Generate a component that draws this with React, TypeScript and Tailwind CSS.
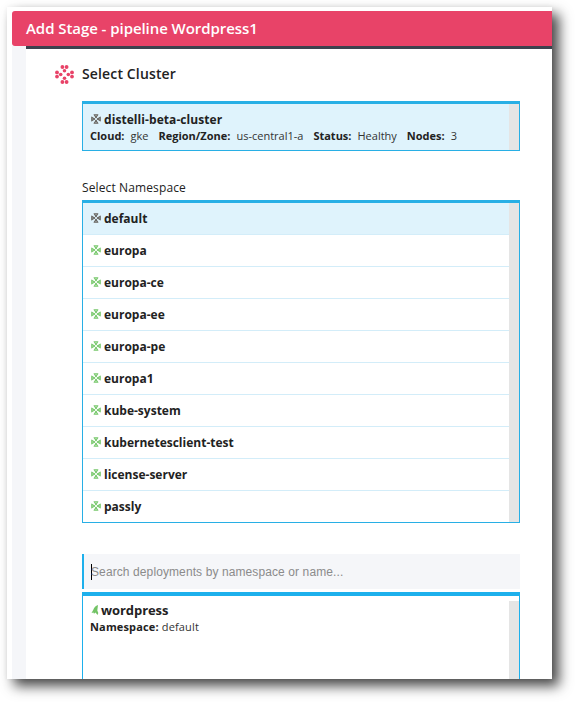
const namespaces = [
  "default", "europa", "europa-ce", "europa-ee", "europa-pe",
  "europa1", "kube-system", "kubernetesclient-test", "license-server", "passly",
];

function ClusterLogo() {
  return (
    <svg className="ml-px h-[19px] w-[19px] shrink-0" viewBox="0 0 19 19" fill="#e84368">
      {[0, 90, 180, 270].map((angle) => (
        <g key={angle} transform={`rotate(${angle} 9.5 9.5)`}>
          <circle cx="7.4" cy="2" r="1.9" />
          <circle cx="11.6" cy="2" r="1.9" />
          <circle cx="9.5" cy="5.7" r="1.8" />
        </g>
      ))}
    </svg>
  );
}

function ClusterIcon({ color }: { color: string }) {
  return (
    <svg className="-mt-px h-[10px] w-[10px] shrink-0 overflow-visible" viewBox="0 0 20 20" fill={color} stroke={color}>
      {[0, 90, 180, 270].map((angle) => (
        <g key={angle} transform={`rotate(${angle} 10 10)`}>
          <path d="M6.3 1.5H13.7L10 7Z" fillOpacity="0.35" strokeWidth="2.3" strokeLinejoin="round" />
          <circle cx="10" cy="7" r="1" />
        </g>
      ))}
    </svg>
  );
}

function Detail({ label, value }: { label: string; value: string }) {
  return (
    <span className="flex gap-[6px]">
      <b>{label}</b>
      <span className="text-[#333]">{value}</span>
    </span>
  );
}

export default function App() {
  return (
    <div className="h-[702px] w-[575px] overflow-hidden bg-white pl-[7px] pt-[7px] font-['Open_Sans',sans-serif] text-[#222]">
      <div className="flex h-[672px] w-[545px] flex-col bg-white pl-[5px] pt-1 shadow-[7px_7px_12px_rgba(0,0,0,0.72),0_0_5px_rgba(0,0,0,0.05)]">
        <header className="flex h-[35px] shrink-0 items-center rounded-l-[3px] bg-[#e84368] pl-[14px] text-[15px] font-semibold tracking-[-0.06px] text-white">
          <span>Add Stage - pipeline Wordpress1</span>
        </header>
        <div className="flex min-h-0 flex-1">
          <div className="w-[14px] shrink-0 bg-[#f5f6f9]" />
          <main className="flex min-w-0 flex-1 flex-col overflow-hidden border-t-[3px] border-[#3c424e] pl-[56px] pr-8">
            <div className="-ml-[28px] mt-[15px] flex h-5 shrink-0 items-center gap-2 text-[14px] font-semibold tracking-[0.14px]">
              <ClusterLogo />
              <h1 className="-mt-[2px]">Select Cluster</h1>
            </div>
            <section className="mt-[17px] flex h-[50px] shrink-0 border border-t-[3px] border-[#28afe5] bg-[#dff3fc]">
              <div className="flex-1 pl-[7px] pt-[7px]">
                <div className="flex h-[17px] items-center gap-[3px] pl-px text-[12px] font-bold leading-[18px] tracking-[0.07px]">
                  <ClusterIcon color="#696762" />
                  <span>distelli-beta-cluster</span>
                </div>
                <div className="flex h-4 items-center gap-[10px] whitespace-nowrap text-[11px] leading-4">
                  <Detail label="Cloud:" value="gke" />
                  <Detail label="Region/Zone:" value="us-central1-a" />
                  <Detail label="Status:" value="Healthy" />
                  <Detail label="Nodes:" value="3" />
                </div>
              </div>
              <div className="w-[10px] bg-[#e5e5e5]" />
            </section>
            <div className="mt-[28px] h-[18px] shrink-0 text-[12px] leading-[18px] tracking-[0.12px]">Select Namespace</div>
            <section className="mt-[3px] flex h-[323px] shrink-0 border border-t-[3px] border-[#28afe5]">
              <div className="flex-1 overflow-hidden">
                {namespaces.map((name, i) => (
                  <div
                    key={name}
                    className={`flex h-8 items-center gap-[3px] border-b border-[#d3edf9] pl-2 text-[12px] font-bold ${i === 0 ? "bg-[#dff3fc]" : "bg-white"}`}
                  >
                    <ClusterIcon color={i === 0 ? "#696762" : "#7bc96f"} />
                    <span>{name}</span>
                  </div>
                ))}
              </div>
              <div className="w-[10px] bg-[#e5e5e5]" />
            </section>
            <div className="mt-[31px] flex h-[35px] shrink-0 items-center border-l-2 border-[#1db0ec] bg-[#f5f6f9] pl-[7px] font-['Liberation_Sans',sans-serif] text-[12px] tracking-[0.1px] text-[#8b8b8b]">
              <span className="h-4 w-px bg-black" />
              <span className="-ml-px">Search deployments by namespace or name...</span>
            </div>
            <section className="mt-[3px] flex min-h-0 flex-1 border-x border-t-4 border-[#1db0ec]">
              <div className="flex-1 pl-[7px] pt-[5px]">
                <div className="flex h-[18px] items-center text-[13px] font-bold leading-[18px] tracking-[-0.08px]">
                  <svg className="ml-px mr-[2px] h-[10px] w-2" viewBox="0 0 8 10" fill="#73c366">
                    <path d="M7 0Q3.5 1 2.2 5L.5 8 2.5 7.5 3 8.8 4.5 7.5 6.5 10 7.3 8 6.3 5.5Z" />
                  </svg>
                  <span>wordpress</span>
                </div>
                <div className="text-[11px] leading-4 tracking-[0.15px]">
                  <b>Namespace:</b> <span className="text-[#333]">default</span>
                </div>
              </div>
              <div className="mt-[5px] w-[10px] bg-[#e5e5e5]" />
            </section>
          </main>
        </div>
      </div>
    </div>
  );
}
